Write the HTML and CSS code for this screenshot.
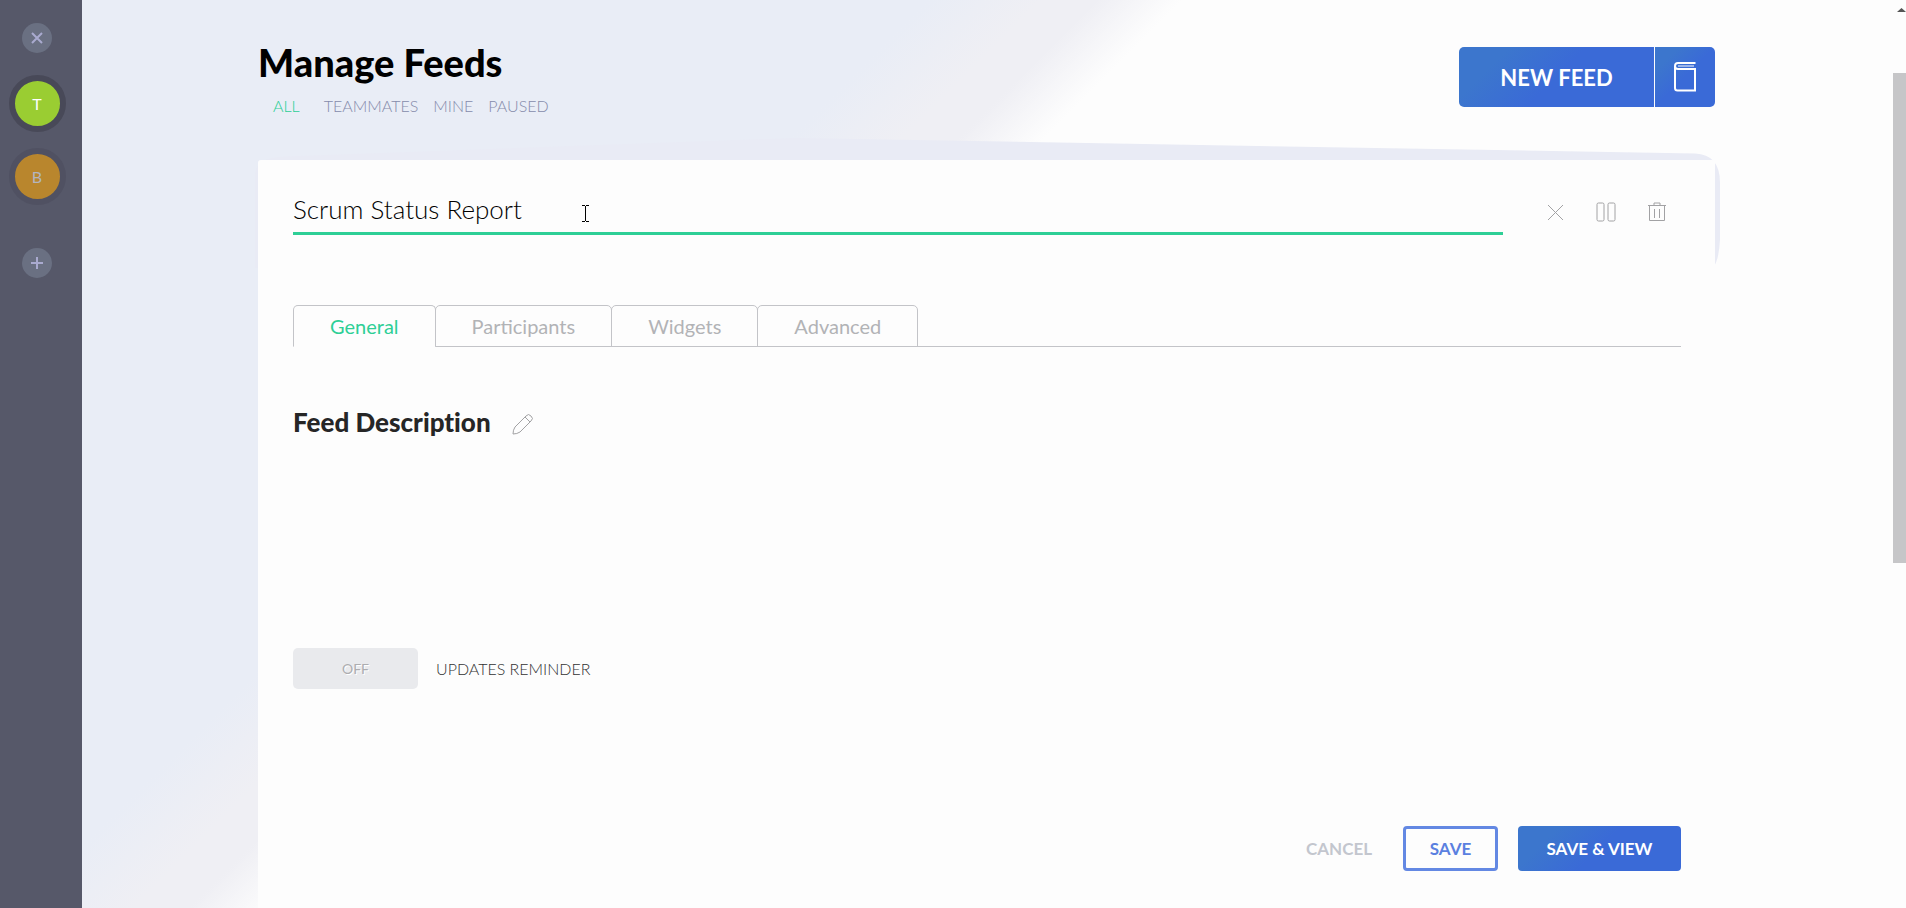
FILE: index.html
```
<!DOCTYPE html>
<html lang="en">
<head>
    <meta charset="UTF-8">
    <meta name="viewport" content="width=device-width, initial-scale=1.0">
    <title>Manage Feeds</title>
    <link rel="stylesheet" href="styles.css">
</head>
<body>
<div class="app">
    <!-- Team switcher -->
    <nav class="sidebar" aria-label="Teams">
        <button class="round-button" type="button" aria-label="Close">
            <svg width="12" height="12" viewBox="0 0 12 12"><path d="M1 1l10 10M11 1L1 11"/></svg>
        </button>
        <a class="team team-active" href="#">T</a>
        <a class="team team-muted" href="#">B</a>
        <button class="round-button add-team" type="button" aria-label="Add team">
            <svg width="12" height="12" viewBox="0 0 12 12"><path d="M6 0v12M0 6h12"/></svg>
        </button>
    </nav>

    <main class="main">
        <header class="page-header">
            <div>
                <h1>Manage Feeds</h1>
                <nav class="filters" aria-label="Filters">
                    <a class="filter-active" href="#">ALL</a>
                    <a href="#">TEAMMATES</a>
                    <a href="#">MINE</a>
                    <a href="#">PAUSED</a>
                </nav>
            </div>
            <div class="new-feed">
                <button class="primary new-feed-button" type="button">NEW FEED</button>
                <button class="primary template-button" type="button" aria-label="Feed templates">
                    <svg width="22" height="30" viewBox="0 0 22 30"><path d="M21.500 1H4Q1 1 1 4V26Q1 28.500 3.500 28.500H21V7H4Q1 7 1 4"/><path class="book-pages" d="M4 4h16"/></svg>
                </button>
            </div>
        </header>

        <section class="card">
            <svg class="card-backdrop" viewBox="0 0 1465 134" preserveAspectRatio="none"><path d="M0 38Q0 20 30 19L540 0L1440 16Q1465 17 1465 46V105Q1464 126 1458 134H0Z"/></svg>
            <form class="feed-form">
                <div class="title-row">
                    <input class="feed-name" type="text" value="Scrum Status Report" aria-label="Feed name">
                    <div class="actions">
                        <button type="button" aria-label="Close feed">
                            <svg width="20" height="20" viewBox="0 0 20 20"><path d="M3 3l15 15M18 3L3 18"/></svg>
                        </button>
                        <button type="button" aria-label="Pause feed">
                            <svg width="20" height="20" viewBox="0 0 20 20"><rect x="1" y="1" width="7" height="18" rx="1.500"/><rect x="12" y="1" width="7" height="18" rx="1.500"/></svg>
                        </button>
                        <button type="button" aria-label="Delete feed">
                            <svg width="20" height="20" viewBox="0 0 20 20"><path d="M1 3.500h18M7 3V1h6v2M2.500 4v14.500h15V4M7.500 7v9M12.500 7v9"/></svg>
                        </button>
                    </div>
                    <svg class="text-cursor" width="8" height="17" viewBox="0 0 8 17"><path d="M0 .5h3M4 .5h3M3.500 1v15M0 16.500h3M4 16.500h3"/></svg>
                </div>

                <div class="tabs" role="tablist">
                    <button class="tab tab-active" type="button" role="tab" aria-selected="true">General</button>
                    <button class="tab" type="button" role="tab" aria-selected="false">Participants</button>
                    <button class="tab" type="button" role="tab" aria-selected="false">Widgets</button>
                    <button class="tab" type="button" role="tab" aria-selected="false">Advanced</button>
                </div>

                <div class="description">
                    <h2>Feed Description</h2>
                    <button class="edit-button" type="button" aria-label="Edit description">
                        <svg width="22" height="22" viewBox="0 0 22 22"><path d="M1 21Q1 17 3 14L14 3Q16.500 0 19 3Q22 5.500 19 8L8 19Q5 21 1 21zM13 4l5 5"/></svg>
                    </button>
                </div>

                <div class="reminder">
                    <button class="toggle" id="reminder" type="button" aria-pressed="false">OFF</button>
                    <label for="reminder">UPDATES REMINDER</label>
                </div>

                <div class="form-buttons">
                    <button class="cancel" type="button">CANCEL</button>
                    <button class="save" type="button">SAVE</button>
                    <button class="primary save-view" type="submit">SAVE &amp; VIEW</button>
                </div>
            </form>
        </section>
    </main>

    <div class="scrollbar">
        <div class="scroll-arrow"></div>
        <div class="scroll-thumb"></div>
    </div>
</div>
</body>
</html>
```
FILE: styles.css
```
* {
    box-sizing: border-box;
}

body {
    margin: 0;
    font-family: Lato, "Open Sans", sans-serif;
    font-variant-ligatures: none;
    background-color: #fdfdfd;
    color: #000;
}

button {
    border: none;
    background: none;
    padding: 0;
    font-family: inherit;
    color: inherit;
    cursor: pointer;
}

a {
    text-decoration: none;
}

svg {
    display: block;
    fill: none;
    stroke: currentColor;
}

.app {
    display: flex;
    min-height: 100vh;
    background: linear-gradient(135deg, #e9edf6 33%, #efeff4 37%, #efeff4 39%, #fdfdfd 42%);
}

/* Sidebar */
.sidebar {
    width: 82px;
    flex-shrink: 0;
    padding: 23px 8px 0 0;
    background-color: #565869;
    display: flex;
    flex-direction: column;
    align-items: center;
}

.round-button {
    width: 30px;
    height: 30px;
    border-radius: 50%;
    background-color: #6a7082;
    color: #a9aacf;
    display: flex;
    align-items: center;
    justify-content: center;
}

.round-button svg {
    stroke-width: 2;
}

.team {
    width: 57px;
    height: 57px;
    margin-top: 22px;
    border: 6px solid #484958;
    border-radius: 50%;
    background-color: #9acd32;
    color: #fff;
    font-size: 16px;
    display: flex;
    align-items: center;
    justify-content: center;
}

.team-muted {
    margin-top: 16px;
    border-color: #505162;
    background-color: #b9862d;
    color: #b4b5bd;
}

.add-team {
    margin-top: 43px;
}

/* Header */
.main {
    flex: 1;
    min-width: 0;
    padding: 0 178px 0 176px;
    display: flex;
    flex-direction: column;
}

.page-header {
    height: 160px;
    padding-top: 40px;
    display: flex;
    justify-content: space-between;
    align-items: flex-start;
}

h1 {
    margin: 0;
    font-size: 38px;
    line-height: 44px;
    font-weight: 900;
}

.filters {
    display: flex;
    gap: 15px;
    margin-top: 11px;
    padding-left: 15px;
    font-size: 16px;
    line-height: 22px;
    font-weight: 300;
}

.filters a {
    color: #858bab;
}

.filters .filter-active {
    color: #2ecf96;
    margin-right: 9px;
}

.primary {
    background: linear-gradient(135deg, #3c76cd 20%, #3a6ad7 50%);
    color: #fff;
    font-weight: bold;
}

.new-feed {
    display: flex;
    gap: 1px;
    margin-top: 7px;
    height: 60px;
}

.new-feed-button {
    width: 195px;
    border-radius: 5px 0 0 5px;
    font-size: 22px;
}

.template-button {
    width: 60px;
    border-radius: 0 5px 5px 0;
    display: flex;
    align-items: center;
    justify-content: center;
}

.template-button svg {
    stroke-width: 2;
}

.template-button .book-pages {
    stroke-width: 1;
}

/* Feed card */
.card {
    position: relative;
    flex: 1;
    display: flex;
}

.card-backdrop {
    position: absolute;
    top: -22px;
    left: -3px;
    width: calc(100% + 8px);
    height: 130px;
    fill: #e9ebf5;
    stroke: none;
}

.feed-form {
    position: relative;
    flex: 1;
    min-width: 0;
    padding: 30px 34px 37px 35px;
    border-radius: 3px 3px 0 0;
    background-color: #fdfdfd;
    display: flex;
    flex-direction: column;
}

.title-row {
    position: relative;
    display: flex;
    align-items: flex-start;
    gap: 42px;
}

.feed-name {
    flex: 1;
    min-width: 0;
    height: 45px;
    padding: 0 0 4px;
    border: none;
    border-bottom: 3px solid #2ecf96;
    outline: none;
    background: none;
    color: #000;
    font-family: inherit;
    font-size: 26px;
    font-weight: 300;
}

.text-cursor {
    position: absolute;
    top: 15px;
    left: 289px;
    color: #000;
}

.actions {
    display: flex;
    gap: 31px;
    padding: 12px 14px 0 0;
    color: #a2a2a4;
}

.tabs {
    display: flex;
    margin-top: 70px;
    border-bottom: 1px solid #c3c4c8;
}

.tab {
    height: 42px;
    margin-bottom: -1px;
    margin-right: -1px;
    padding: 0 36px;
    border: 1px solid #c3c4c8;
    border-radius: 5px 5px 0 0;
    color: #b2b3b6;
    font-size: 20px;
}

.tab-active {
    border-bottom-color: #fdfdfd;
    color: #2ecf96;
}

.description {
    display: flex;
    align-items: center;
    gap: 21px;
    margin-top: 57px;
}

h2 {
    margin: 0;
    font-size: 26px;
    line-height: 36px;
    font-weight: 900;
    color: #262626;
}

.edit-button {
    margin-top: 4px;
    color: #a2a2a4;
}

/* Reminder toggle */
.reminder {
    display: flex;
    align-items: center;
    gap: 18px;
    margin-top: 208px;
    color: #333;
    font-size: 16px;
    font-weight: 300;
}

.toggle {
    width: 125px;
    height: 41px;
    border-radius: 5px;
    background-color: #e9eaed;
    color: #adadb0;
    font-size: 14px;
    text-shadow: 1px 1px 0 #fff;
}

.form-buttons {
    display: flex;
    justify-content: flex-end;
    align-items: center;
    margin-top: auto;
}

.form-buttons button {
    height: 45px;
    border-radius: 4px;
    font-size: 17px;
    font-weight: bold;
}

.form-buttons .cancel {
    margin-right: 31px;
    color: #c3c6ce;
}

.form-buttons .save {
    width: 95px;
    margin-right: 20px;
    border: 3px solid #6388e3;
    color: #5a80e0;
}

.form-buttons .save-view {
    width: 163px;
}

/* Scrollbar */
.scrollbar {
    width: 13px;
    flex-shrink: 0;
    height: 100vh;
    background-color: #fdfdfd;
}

.scroll-arrow {
    width: 9px;
    height: 12px;
    margin-left: auto;
    background-color: #555;
    clip-path: polygon(50% 66%, 100% 100%, 0 100%);
}

.scroll-thumb {
    height: 54%;
    margin-top: 61px;
    background-color: #c6c6c8;
}
```
